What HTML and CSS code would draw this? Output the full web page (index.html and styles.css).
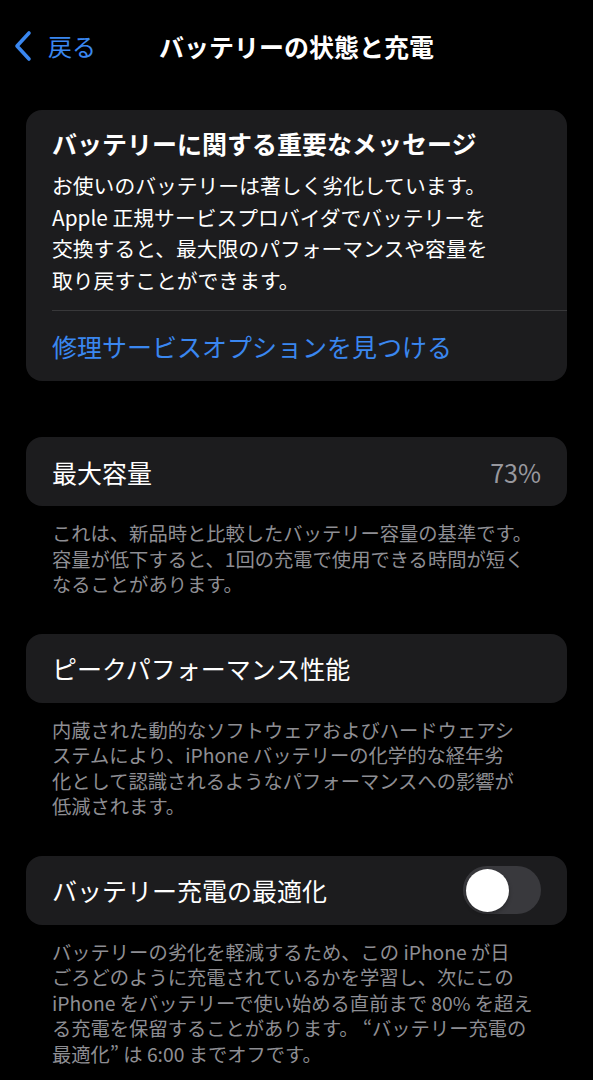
FILE: index.html
```html
<!DOCTYPE html>
<html lang="ja">
<head>
  <meta charset="UTF-8" />
  <meta name="viewport" content="width=device-width, initial-scale=1.0" />
  <title>バッテリーの状態と充電</title>
  <link rel="stylesheet" href="styles.css">
</head>
<body>
  <header class="nav">
    <a class="back" href="#">
      <svg class="chevron" width="20" height="32" viewBox="0 0 20 32">
        <polyline points="16,3 4,16 16,29" fill="none" stroke="#3a87f0" stroke-width="3.6" stroke-linecap="round" stroke-linejoin="round"/>
      </svg>
      <span>戻る</span>
    </a>
    <h1>バッテリーの状態と充電</h1>
  </header>

  <main class="content">
    <section class="card message">
      <h2>バッテリーに関する重要なメッセージ</h2>
      <p class="message-body">お使いのバッテリーは著しく劣化しています。<br>Apple 正規サービスプロバイダでバッテリーを<br>交換すると、最大限のパフォーマンスや容量を<br>取り戻すことができます。</p>
      <div class="divider"></div>
      <a class="link" href="#">修理サービスオプションを見つける</a>
    </section>

    <section class="group first">
      <div class="card row">
        <span class="label">最大容量</span>
        <span class="value">73%</span>
      </div>
      <p class="footer">これは、新品時と比較したバッテリー容量の基準です。<br>容量が低下すると、1回の充電で使用できる時間が短く<br>なることがあります。</p>
    </section>

    <section class="group">
      <div class="card row">
        <span class="label">ピークパフォーマンス性能</span>
      </div>
      <p class="footer">内蔵された動的なソフトウェアおよびハードウェアシ<br>ステムにより、iPhone バッテリーの化学的な経年劣<br>化として認識されるようなパフォーマンスへの影響が<br>低減されます。</p>
    </section>

    <section class="group">
      <div class="card row">
        <span class="label">バッテリー充電の最適化</span>
        <span class="toggle"><span class="knob"></span></span>
      </div>
      <p class="footer">バッテリーの劣化を軽減するため、この iPhone が日<br>ごろどのように充電されているかを学習し、次にこの<br>iPhone をバッテリーで使い始める直前まで 80% を超え<br>る充電を保留することがあります。 “バッテリー充電の<br>最適化” は 6:00 までオフです。</p>
    </section>
  </main>
</body>
</html>
```

FILE: styles.css
```css
* {
  box-sizing: border-box;
  font-family: "Noto Sans CJK JP", "Noto Sans", sans-serif;
}
body {
  background: #000;
  color: #fff;
  margin: 0;
  width: 593px;
  height: 1080px;
  overflow: hidden;
}
.nav {
  position: relative;
  height: 92px;
  display: flex;
  align-items: center;
  justify-content: center;
}
.back {
  position: absolute;
  left: 13px;
  top: 29px;
  display: flex;
  align-items: center;
  gap: 15px;
  color: #3a87f0;
  text-decoration: none;
  font-size: 24px;
  line-height: 34px;
}
.chevron {
  display: block;
}
.nav h1 {
  margin: 0;
  font-size: 25px;
  font-weight: 600;
  line-height: 34px;
}
.content {
  padding: 18px 26px 0;
}
.card {
  background: #1c1c1e;
  border-radius: 16px;
}
.message {
  padding: 17px 0 19px 26px;
}
.message h2 {
  margin: 0;
  font-size: 25px;
  font-weight: 600;
  line-height: 32px;
}
.message-body {
  margin: 11px 0 0;
  font-size: 20.8px;
  line-height: 31.5px;
  white-space: nowrap;
}
.divider {
  height: 1px;
  background: #38383a;
  margin-top: 14px;
}
.link {
  display: block;
  margin-top: 19px;
  color: #3a87f0;
  text-decoration: none;
  font-size: 25px;
  line-height: 32px;
}
.group {
  margin-top: 36px;
}
.group.first {
  margin-top: 56px;
}
.row {
  height: 69px;
  display: flex;
  align-items: center;
  justify-content: space-between;
  padding: 0 26px;
}
.label {
  font-size: 25px;
  line-height: 32px;
}
.value {
  font-size: 25px;
  color: #98989e;
}
.toggle {
  width: 78px;
  height: 48px;
  border-radius: 24px;
  background: #39393d;
  display: flex;
  align-items: center;
  padding: 0 3px;
}
.knob {
  width: 43px;
  height: 43px;
  border-radius: 50%;
  background: #fff;
  box-shadow: 0 2px 4px rgba(0,0,0,0.3);
}
.footer {
  margin: 15px 0 0;
  padding: 0 26px;
  font-size: 19.3px;
  line-height: 25.5px;
  color: #8e8e93;
  white-space: nowrap;
}
```
